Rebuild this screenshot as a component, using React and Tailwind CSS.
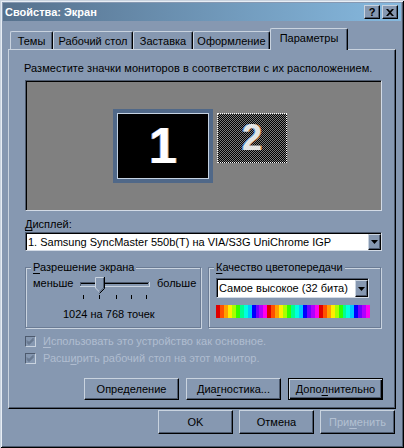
import React from "react";

const SPECTRUM = [
  "bg-[#e00000]", "bg-[#ff5000]", "bg-[#ffa000]", "bg-[#ffee00]", "bg-[#a8ff00]", "bg-[#30ff00]",
  "bg-[#00ff90]", "bg-[#00ffe0]", "bg-[#00c8ff]", "bg-[#0000ff]", "bg-[#7000ff]", "bg-[#b000ff]", "bg-[#ff00f0]",
];

function U({ children }) {
  return <span className="underline decoration-1 underline-offset-[2px]">{children}</span>;
}

function Arrow() {
  return (
    <svg width="7" height="4" viewBox="0 0 7 4">
      <path d="M0 0h7L3.5 4z" fill="#000" />
    </svg>
  );
}

function Combo({ text, className }) {
  return (
    <div
      className={
        "flex bg-white border border-t-[#4d5a6e] border-l-[#4d5a6e] border-b-[#d3dbe6] border-r-[#d3dbe6] shadow-[inset_1px_1px_0_#000] " +
        className
      }
    >
      <div className="flex-1 flex items-center pl-[2px] pt-[1px] whitespace-nowrap overflow-hidden">{text}</div>
      <div className="w-[13px] mt-[1px] bg-[#8698b1] border border-t-[#c9d3df] border-l-[#c9d3df] border-r-[#000] border-b-[#000] shadow-[inset_-1px_-1px_0_#4d5a6e] flex items-center justify-center">
        <Arrow />
      </div>
    </div>
  );
}

function Btn({ children, w, def, disabled, h }) {
  return (
    <div
      className={
        "flex items-center justify-center bg-[#8698b1] " +
        (w || "w-[95px]") +
        " " +
        (h || "h-[22px]") +
        " " +
        (def
          ? "border border-[#000] shadow-[inset_1px_1px_0_#c9d3df,inset_-1px_-1px_0_#000,inset_-2px_-2px_0_#4d5a6e]"
          : "border border-t-[#c9d3df] border-l-[#c9d3df] border-r-[#000] border-b-[#000] shadow-[inset_-1px_-1px_0_#4d5a6e]") +
        " " +
        (disabled ? "text-[#b3c0d2]" : "text-black")
      }
    >
      {children}
    </div>
  );
}

function Check({ children }) {
  return (
    <div className="flex items-center h-[13px] text-[#b0bdd0]">
      <div className="w-[11px] h-[11px] border border-t-[#4d5a6e] border-l-[#4d5a6e] border-b-[#c9d3df] border-r-[#c9d3df] bg-[#8698b1] flex items-center justify-center">
        <svg width="9" height="9" viewBox="0 0 9 9">
          <path d="M1 3.5l2 2 4.5-4.5M1 4.5l2 2 4.5-4.5M1 5.5l2 2 4.5-4.5" stroke="#5f6f86" strokeWidth="1" fill="none" />
        </svg>
      </div>
      <div className="ml-[7px] whitespace-nowrap">{children}</div>
    </div>
  );
}

function Slider() {
  return (
    <svg width="72" height="24" viewBox="0 0 72 24" className="block">
      <rect x="0" y="5" width="70" height="4" fill="#8698b1" />
      <path d="M0 5.5h69" stroke="#4d5a6e" />
      <path d="M1 6.5h67" stroke="#000" />
      <path d="M0 9.5h70" stroke="#c9d3df" />
      <path d="M0.5 5v4" stroke="#4d5a6e" />
      <path d="M69.5 5v5" stroke="#c9d3df" />
      <polygon points="15,0 24,0 24,11 19.5,15.5 15,11" fill="#8698b1" />
      <polyline points="15.5,11 15.5,0.5 23.5,0.5" stroke="#c9d3df" fill="none" />
      <polyline points="15.5,11 19.5,15" stroke="#c9d3df" fill="none" />
      <polyline points="24.5,0 24.5,11.5 19.5,16.5" stroke="#000" fill="none" />
      <polyline points="23.5,1 23.5,11 19.5,15" stroke="#4d5a6e" fill="none" />
      <path d="M3.5 18v4M19.5 18v4M36.5 18v4M51.5 18v4M66.5 18v4" stroke="#000" />
    </svg>
  );
}

export default function App() {
  return (
    <div className="w-[404px] h-[448px] bg-[#8698b1] shadow-[inset_1px_1px_0_#c9d3df,inset_-1px_-1px_0_#000,inset_2px_2px_0_#e8eef5,inset_-2px_-2px_0_#4d5a6e] flex flex-col font-['Liberation_Sans',Arial,sans-serif] text-[11px] leading-[13px] text-black overflow-hidden">
      {/* Title bar */}
      <div className="mx-[3px] mt-[3px] h-[18px] flex items-center bg-[linear-gradient(90deg,#56718d,#86b9df)] pl-[2px] pr-[3px]">
        <div className="text-white font-bold">Свойства: Экран</div>
        <div className="ml-auto flex gap-[2px]">
          <div className="w-[16px] h-[14px] bg-[#8698b1] border border-t-[#c9d3df] border-l-[#c9d3df] border-r-[#000] border-b-[#000] shadow-[inset_-1px_-1px_0_#4d5a6e] flex items-center justify-center font-bold text-[11px] leading-[11px]">
            ?
          </div>
          <div className="w-[16px] h-[14px] bg-[#8698b1] border border-t-[#c9d3df] border-l-[#c9d3df] border-r-[#000] border-b-[#000] shadow-[inset_-1px_-1px_0_#4d5a6e] flex items-center justify-center">
            <svg width="8" height="7" viewBox="0 0 8 7">
              <path d="M0 0h2l2 2 2-2h2L5 3.5 8 7H6L4 5 2 7H0l3-3.5z" fill="#000" />
            </svg>
          </div>
        </div>
      </div>

      {/* Tabs */}
      <div className="mt-[7px] ml-[10px] flex items-end h-[21px]">
        {[
          ["Темы", "w-[43px]"],
          ["Рабочий стол", "w-[80px]"],
          ["Заставка", "w-[60px]"],
          ["Оформление", "w-[77px]"],
        ].map(([t, w]) => (
          <div
            key={t}
            className={
              w +
              " h-[18px] border-l border-t border-r border-l-[#c9d3df] border-t-[#c9d3df] border-r-[#000] shadow-[inset_-1px_0_0_#4d5a6e] rounded-t-[2px] flex items-center justify-center whitespace-nowrap pt-[2px]"
            }
          >
            {t}
          </div>
        ))}
        <div className="w-[78px] h-[22px] -mb-[1px] relative z-10 bg-[#8698b1] border-l border-t border-r border-l-[#c9d3df] border-t-[#c9d3df] border-r-[#000] shadow-[inset_-1px_0_0_#4d5a6e] rounded-t-[2px] flex items-start justify-center pt-[3px] whitespace-nowrap">
          Параметры
        </div>
      </div>

      {/* Panel */}
      <div className="mx-[8px] h-[360px] border border-t-[#c9d3df] border-l-[#c9d3df] border-r-[#000] border-b-[#000] shadow-[inset_-1px_-1px_0_#4d5a6e]">
        <div className="flex flex-col pl-[16px] pr-[13px] pt-[12px]">
          <div className="-ml-[1px] whitespace-nowrap tracking-[0.06px]">Разместите значки мониторов в соответствии с их расположением.</div>

          <div className="mt-[5px] h-[131px] bg-[#808080] border border-t-[#4d5a6e] border-l-[#4d5a6e] border-b-[#d3dbe6] border-r-[#d3dbe6] shadow-[inset_1px_1px_0_#000] flex items-start pl-[87px] pt-[28px] gap-[4px]">
            <div className="w-[100px] h-[74px] border-[4px] border-[#506888] bg-black shadow-[inset_0_0_0_1px_#c4d2e2] flex items-center justify-center">
              <span className="text-white font-bold text-[50px] leading-[50px] [text-shadow:-1px_0_0_#4a90ff,1px_0_0_#ffb060]">1</span>
            </div>
            <div className="mt-[4px] w-[70px] h-[50px] border border-dotted border-white bg-[repeating-conic-gradient(#000_0_25%,#7c7c7c_0_50%)] bg-[length:2px_2px] flex items-center justify-center">
              <span className="text-[#e4e4e4] font-bold text-[36px] leading-[36px] [text-shadow:-1px_0_0_#5a90d0,1px_0_0_#c08050]">2</span>
            </div>
          </div>

          <div className="mt-[7px]">
            <U>Д</U>исплей:
          </div>
          <Combo className="mt-[1px] h-[19px]" text="1. Samsung SyncMaster 550b(T) на VIA/S3G UniChrome IGP" />

          <div className="mt-[10px] flex gap-[7px]">
            <fieldset className="w-[176px] h-[67px] border border-[#6b7c95] shadow-[inset_1px_1px_0_#c9d3df,1px_1px_0_#c9d3df]">
              <legend className="ml-[5px] px-[2px] bg-[#8698b1]">
                <U>Р</U>азрешение экрана
              </legend>
              <div className="mt-[3px] flex items-start h-[24px]">
                <div className="ml-[7px] w-[47px]">меньше</div>
                <Slider />
                <div className="ml-[5px]">больше</div>
              </div>
              <div className="mt-[7px] ml-[37px] whitespace-nowrap">1024 на 768 точек</div>
            </fieldset>
            <fieldset className="w-[173px] h-[67px] border border-[#6b7c95] shadow-[inset_1px_1px_0_#c9d3df,1px_1px_0_#c9d3df]">
              <legend className="ml-[5px] px-[2px] bg-[#8698b1]">
                <U>К</U>ачество цветопередачи
              </legend>
              <Combo className="mt-[4px] ml-[7px] w-[153px] h-[20px]" text="Самое высокое (32 бита)" />
              <div className="mt-[7px] ml-[7px] w-[154px] h-[13px] flex">
                {[0, 1, 2].map((r) =>
                  SPECTRUM.map((c, i) => <div key={r + "-" + i} className={"flex-1 " + c} />)
                )}
              </div>
            </fieldset>
          </div>

          <div className="mt-[7px] flex flex-col gap-[4px]">
            <Check>
              <U>И</U>спользовать это устройство как основное.
            </Check>
            <Check>
              Расш<U>и</U>рить рабочий стол на этот монитор.
            </Check>
          </div>

          <div className="mt-[13px] flex justify-end gap-[7px] -mr-[1px]">
            <Btn>
              Опре<U>д</U>еление
            </Btn>
            <Btn>
              Диа<U>г</U>ностика...
            </Btn>
            <Btn def>
              Допо<U>л</U>нительно
            </Btn>
          </div>
        </div>
      </div>

      {/* Bottom buttons */}
      <div className="mt-[1px] flex justify-end gap-[6px] pr-[9px]">
        <Btn w="w-[75px]" h="h-[24px]">OK</Btn>
        <Btn w="w-[75px]" h="h-[24px]">Отмена</Btn>
        <Btn w="w-[75px]" h="h-[24px]" disabled>
          При<U>м</U>енить
        </Btn>
      </div>
    </div>
  );
}
